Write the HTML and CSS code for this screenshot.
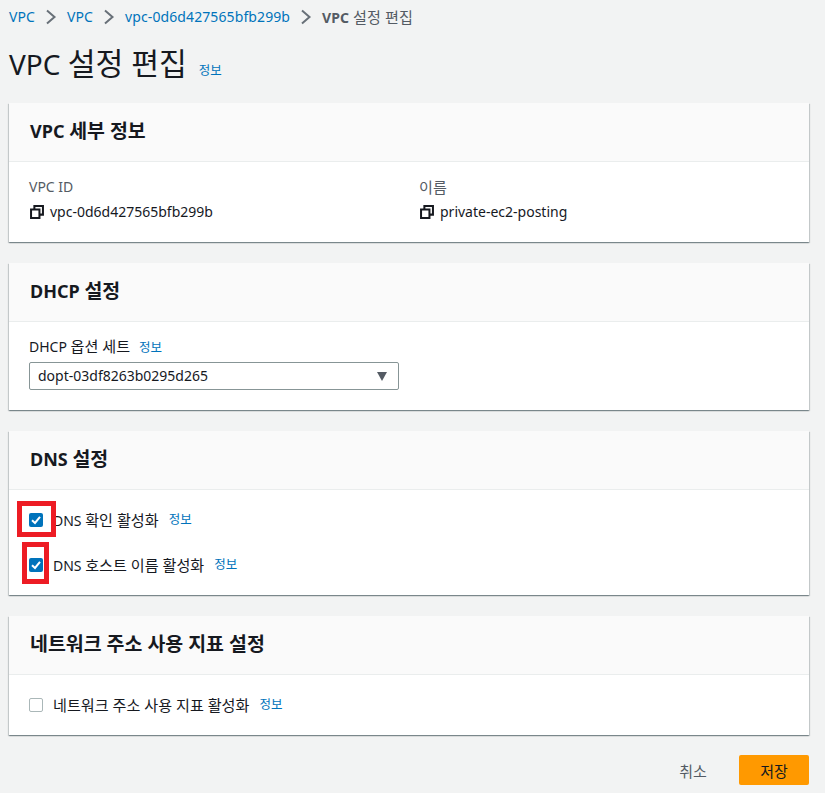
FILE: index.html
```html
<!DOCTYPE html>
<html lang="ko">
<head>
<meta charset="utf-8">
<title>VPC 설정 편집</title>
<link rel="stylesheet" href="styles.css">
</head>
<body>
<svg class="defs" width="0" height="0" aria-hidden="true">
  <symbol id="copy" viewBox="0 0 16 16">
    <path d="M1.2 5.2h9.6v9.6H1.2z M5 5V1.2h9.8V11H11" fill="none" stroke="currentColor" stroke-width="2.3"/>
  </symbol>
  <symbol id="chev" viewBox="0 0 16 16">
    <path d="M4 1.5 11.5 8 4 14.5" fill="none" stroke="currentColor" stroke-width="2"/>
  </symbol>
  <symbol id="check" viewBox="0 0 14 14">
    <path d="M3 7.2 6 10l5-6.2" fill="none" stroke="#fff" stroke-width="2"/>
  </symbol>
</svg>
<nav class="crumbs">
  <a href="#">VPC</a><svg class="chev"><use href="#chev"/></svg>
  <a href="#">VPC</a><svg class="chev"><use href="#chev"/></svg>
  <a href="#">vpc-0d6d427565bfb299b</a><svg class="chev"><use href="#chev"/></svg>
  <span class="current"><b>VPC</b> <span class="ko">설정 편집</span></span>
</nav>
<header class="title">
  <h1>VPC <span class="ko">설정 편집</span></h1><a href="#" class="info">정보</a>
</header>
<section class="card">
  <h2><span>VPC <span class="ko">세부 정보</span></span></h2>
  <div class="body details">
    <div>
      <div class="key">VPC ID</div>
      <div class="val"><svg class="copy"><use href="#copy"/></svg>vpc-0d6d427565bfb299b</div>
    </div>
    <div>
      <div class="key ko">이름</div>
      <div class="val"><svg class="copy"><use href="#copy"/></svg>private-ec2-posting</div>
    </div>
  </div>
</section>
<section class="card">
  <h2><span>DHCP <span class="ko">설정</span></span></h2>
  <div class="body dhcp">
    <div class="field-label">DHCP <span class="ko">옵션 세트</span><a href="#" class="info">정보</a></div>
    <div class="select">dopt-03df8263b0295d265<span class="caret"></span></div>
  </div>
</section>
<section class="card">
  <h2><span>DNS <span class="ko">설정</span></span></h2>
  <div class="body dns">
    <div class="row"><span class="box on"><svg><use href="#check"/></svg></span><span>DNS <span class="ko">확인 활성화</span></span><a href="#" class="info">정보</a><i class="mark mark-a"></i></div>
    <div class="row"><span class="box on"><svg><use href="#check"/></svg></span><span>DNS <span class="ko">호스트 이름 활성화</span></span><a href="#" class="info">정보</a><i class="mark mark-b"></i></div>
  </div>
</section>
<section class="card">
  <h2><span class="ko">네트워크 주소 사용 지표 설정</span></h2>
  <div class="body metric">
    <div class="row"><span class="box"></span><span class="ko">네트워크 주소 사용 지표 활성화</span><a href="#" class="info">정보</a></div>
  </div>
</section>
<footer class="actions">
  <button class="cancel">취소</button>
  <button class="save">저장</button>
</footer>
</body>
</html>
```
FILE: styles.css
```css
* { box-sizing: border-box; }
html, body { height: 100%; }
body {
  margin: 0;
  padding: 0 16px 0 9px;
  height: 793px;
  overflow: hidden;
  background: #f2f3f3;
  color: #16191f;
  font-family: "Noto Sans", "Noto Sans CJK KR", sans-serif;
  font-size: 14px;
  line-height: 20px;
}
a { color: #0073bb; text-decoration: none; }
.ko { font-size: 1.08em; }
.defs { position: absolute; }
.crumbs {
  display: flex;
  align-items: center;
  height: 20px;
  margin-top: 7px;
  white-space: nowrap;
  letter-spacing: .1px;
}
.chev { width: 16px; height: 16px; margin: 0 8px; color: #687078; flex: none; }
.current { color: #545b64; }
.current b { font-weight: 700; }
.title {
  display: flex;
  align-items: baseline;
  margin-top: 15px;
  height: 61px;
}
.title h1 {
  margin: 0;
  font-size: 28px;
  line-height: 44px;
  font-weight: 400;
}
.info { font-size: 12.5px; }
.title .info { margin-left: 12px; }
.card {
  background: #fff;
  margin-bottom: 21px;
  box-shadow: 0 1px 1px 0 rgba(0, 28, 36, .3), 1px 1px 1px 0 rgba(0, 28, 36, .15), -1px 1px 1px 0 rgba(0, 28, 36, .15);
}
.card h2 {
  margin: 0;
  height: 59px;
  padding: 0 21px 2px;
  display: flex;
  align-items: center;
  background: #fafafa;
  border-bottom: 1px solid #eaeded;
  font-size: 18px;
  font-weight: 700;
}
.body { padding: 0 20px; }
.details {
  height: 80px;
  padding-top: 15px;
  display: grid;
  grid-template-columns: 390px 1fr;
}
.key { color: #545b64; height: 20px; }
.val { display: flex; align-items: center; height: 20px; margin-top: 5px; }
.copy { width: 14px; height: 14px; margin-right: 6px; margin-left: 1px; flex: none; }
.dhcp { height: 88px; padding-top: 14px; }
.field-label { height: 20px; }
.field-label .info { margin-left: 9px; }
.select {
  position: relative;
  width: 370px;
  height: 28px;
  margin-top: 6px;
  padding: 3px 8px;
  border: 1px solid #879596;
  border-radius: 2px;
}
.caret {
  position: absolute;
  right: 11px;
  top: 9px;
  border-style: solid;
  border-width: 9px 5.5px 0;
  border-color: #545b64 transparent transparent;
}
.dns { height: 105px; padding-top: 20px; }
.metric { height: 60px; padding-top: 20px; }
.row { position: relative; display: flex; align-items: center; height: 20px; margin-bottom: 25px; }
.row .info { margin-left: 10px; }
.box {
  width: 14px;
  height: 14px;
  margin-right: 10px;
  border: 1px solid #aab7b8;
  border-radius: 2px;
  background: #fff;
  flex: none;
}
.box.on { border: 0; background: #0073bb; }
.box svg { display: block; width: 14px; height: 14px; }
.mark { position: absolute; border: 5px solid #ed1c24; }
.mark-a { left: -12px; top: -9px; width: 39px; height: 36px; }
.mark-b { left: -7px; top: -13px; width: 27px; height: 42px; }
.actions { display: flex; justify-content: flex-end; align-items: center; margin-top: -1px; }
button {
  font-family: inherit;
  font-size: 15px;
  font-weight: 400;
  height: 30px;
  border: 0;
  border-radius: 2px;
  padding: 0;
}
.cancel { background: none; color: #545b64; margin-right: 32px; width: 28px; }
.save { background: #ff9900; color: #16191f; width: 70px; }
```
